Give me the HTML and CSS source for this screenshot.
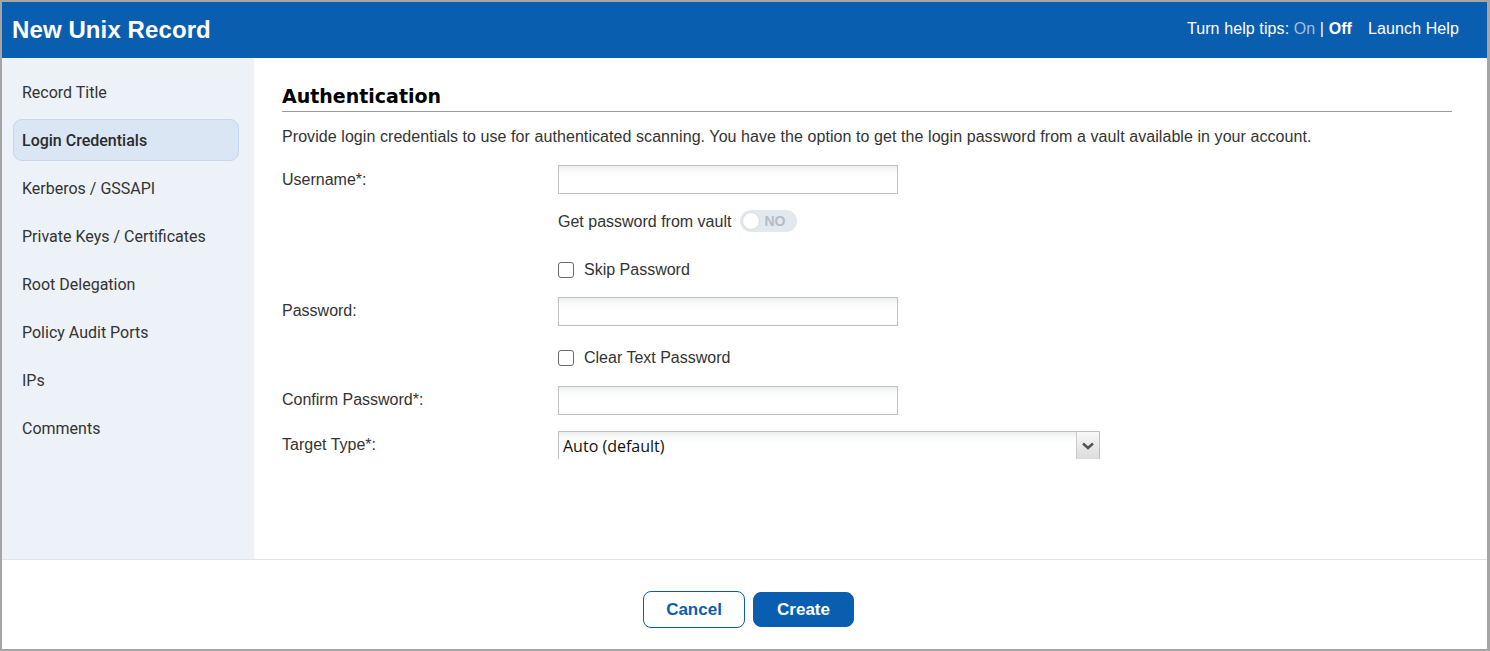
FILE: index.html
```html
<!DOCTYPE html>
<html>
<head>
<meta charset="utf-8">
<title>New Unix Record</title>
<link rel="stylesheet" href="styles.css">
</head>
<body>
<div class="frame">
  <header class="topbar">
    <h1 class="title">New Unix Record</h1>
    <div class="help">
      <span>Turn help tips: <span class="on">On</span> | <b>Off</b></span>
      <span class="launch">Launch Help</span>
    </div>
  </header>
  <div class="main">
    <nav class="sidebar">
      <div class="nav-item">Record Title</div>
      <div class="nav-item active">Login Credentials</div>
      <div class="nav-item">Kerberos / GSSAPI</div>
      <div class="nav-item">Private Keys / Certificates</div>
      <div class="nav-item">Root Delegation</div>
      <div class="nav-item">Policy Audit Ports</div>
      <div class="nav-item">IPs</div>
      <div class="nav-item">Comments</div>
    </nav>
    <section class="content">
      <h2 class="heading">Authentication</h2>
      <p class="desc">Provide login credentials to use for authenticated scanning. You have the option to get the login password from a vault available in your account.</p>
      <div class="form">
        <div class="row r-user">
          <label class="lbl">Username*:</label>
          <div class="input"></div>
        </div>
        <div class="row r-vault">
          <span class="lbl"></span>
          <div class="vault">Get password from vault
            <span class="toggle"><span class="knob"></span><span class="no">NO</span></span>
          </div>
        </div>
        <div class="row r-skip">
          <span class="lbl"></span>
          <div class="check"><span class="box"></span>Skip Password</div>
        </div>
        <div class="row r-pass">
          <label class="lbl">Password:</label>
          <div class="input"></div>
        </div>
        <div class="row r-clear">
          <span class="lbl"></span>
          <div class="check"><span class="box"></span>Clear Text Password</div>
        </div>
        <div class="row r-confirm">
          <label class="lbl">Confirm Password*:</label>
          <div class="input"></div>
        </div>
        <div class="row r-target">
          <label class="lbl">Target Type*:</label>
          <div class="select">
            <span class="sel-text">Auto (default)</span>
            <span class="sel-btn">
              <svg width="12" height="8" viewBox="0 0 12 8"><path d="M1 1.5 L6 6 L11 1.5" fill="none" stroke="#555" stroke-width="2.6"/></svg>
            </span>
          </div>
        </div>
      </div>
    </section>
  </div>
  <footer class="footer">
    <button class="btn btn-cancel">Cancel</button>
    <button class="btn btn-create">Create</button>
  </footer>
</div>
</body>
</html>
```
FILE: styles.css
```css
* { box-sizing: border-box; }
html, body { margin: 0; padding: 0; }
body { width: 1490px; height: 651px; overflow: hidden; background: #fff; font-family: "Liberation Sans", Arial, sans-serif; color: #333; }

.frame {
  width: 1490px; height: 651px;
  border: 2px solid #a5a5a5;
  border-right-width: 3px;
  display: flex; flex-direction: column;
}

.topbar {
  height: 56px; flex: none;
  background: #0a5eb0;
  display: flex; align-items: center; justify-content: space-between;
  padding: 0 28px 0 10px;
  color: #fff;
}
.title { margin: 0; font-size: 24px; font-weight: bold; letter-spacing: 0.1px; }
.help { font-size: 16px; display: flex; gap: 16px; margin-top: -3px; letter-spacing: 0.1px; }
.help .on { color: #a3bedf; }
.help b { font-weight: bold; }

.main { flex: none; display: flex; border-bottom: 1px solid #e2e2e2; height: 502px; }
.sidebar {
  width: 252px; flex: none;
  background: #edf2f9;
  padding: 13px 15px 0 11px;
  display: flex; flex-direction: column; gap: 6px;
}
.nav-item {
  height: 42px; display: flex; align-items: center;
  padding-left: 8px; padding-top: 1px;
  font-family: Roboto, "Liberation Sans", sans-serif; font-size: 16px; color: #333;
  border: 1px solid transparent; border-radius: 9px;
}
.nav-item.active { background: #dae6f3; border-color: #c4d7ec; font-weight: 500; color: #2b2b2b; }

.content { flex: 1; padding: 26px 35px 0 28px; }
.heading {
  margin: 0; font-family: "DejaVu Sans", Verdana, sans-serif; font-weight: bold; font-size: 19px;
  line-height: 24px; padding-bottom: 3px; border-bottom: 1px solid #9a9a9a; color: #000;
}
.desc { margin: 15px 0 0; font-size: 16px; line-height: 20px; color: #333; letter-spacing: 0.07px; }

.form { display: flex; flex-direction: column; }
.row { display: flex; align-items: center; }
.lbl { width: 276px; flex: none; font-size: 16px; color: #333; }
.r-pass .lbl, .r-confirm .lbl { margin-top: -2px; }
.input {
  width: 340px; height: 29px;
  border: 1px solid #c0c0c0;
  background: linear-gradient(#eceeee 0, #fbfbfb 6px, #fff 12px);
}
.r-user { margin-top: 18px; }
.r-vault { margin-top: 16px; height: 22px; }
.r-skip { margin-top: 28px; height: 20px; }
.r-pass { margin-top: 17px; }
.r-clear { margin-top: 22px; height: 20px; }
.r-confirm { margin-top: 18px; }
.r-target { margin-top: 16px; }

.vault { display: flex; align-items: center; gap: 7px; font-size: 16px; color: #333; padding-top: 1px; }
.toggle {
  width: 57px; height: 22px; border-radius: 11px; background: #e3e8ee;
  display: flex; align-items: center; padding-left: 2px; gap: 4px; margin-left: 2px; margin-top: -1px;
}
.knob { width: 18px; height: 18px; border-radius: 50%; background: #fff; border: 1px solid #d5dbe2; }
.no { font-weight: bold; font-size: 14px; color: #b2bcc7; font-family: "Liberation Sans", Arial, sans-serif; }

.check { display: flex; align-items: center; gap: 10px; font-size: 16px; color: #333; }
.box { width: 16px; height: 16px; border: 1px solid #6b6b6b; border-radius: 3px; background: #fff; }

.select {
  width: 542px; height: 28px; display: flex;
  border: 1px solid #c0c0c0; border-bottom: none;
  background: linear-gradient(#eceeee 0, #fbfbfb 6px, #fff 12px);
}
.sel-text { flex: 1; padding: 3px 0 0 4px; font-family: "Open Sans", sans-serif; font-size: 16px; color: #111; line-height: 22px; }
.sel-btn {
  width: 23px; border-left: 1px solid #c8c8c8;
  background: linear-gradient(#f8f8f8, #dcdcdc);
  display: flex; justify-content: center; padding-top: 10px;
}

.footer { flex: 1; display: flex; justify-content: center; align-items: flex-start; gap: 8px; padding: 31px 0 0 8px; }
.btn {
  font-family: "Liberation Sans", Arial, sans-serif; font-weight: bold; font-size: 17px;
  border-radius: 8px; cursor: pointer;
}
.btn-cancel { width: 102px; height: 37px; background: #fff; color: #0a5eb0; border: 1px solid #0a5eb0; }
.btn-create { width: 101px; height: 35px; margin-top: 1px; background: #0a5eb0; color: #fff; border: 1px solid #0a5eb0; }
```
